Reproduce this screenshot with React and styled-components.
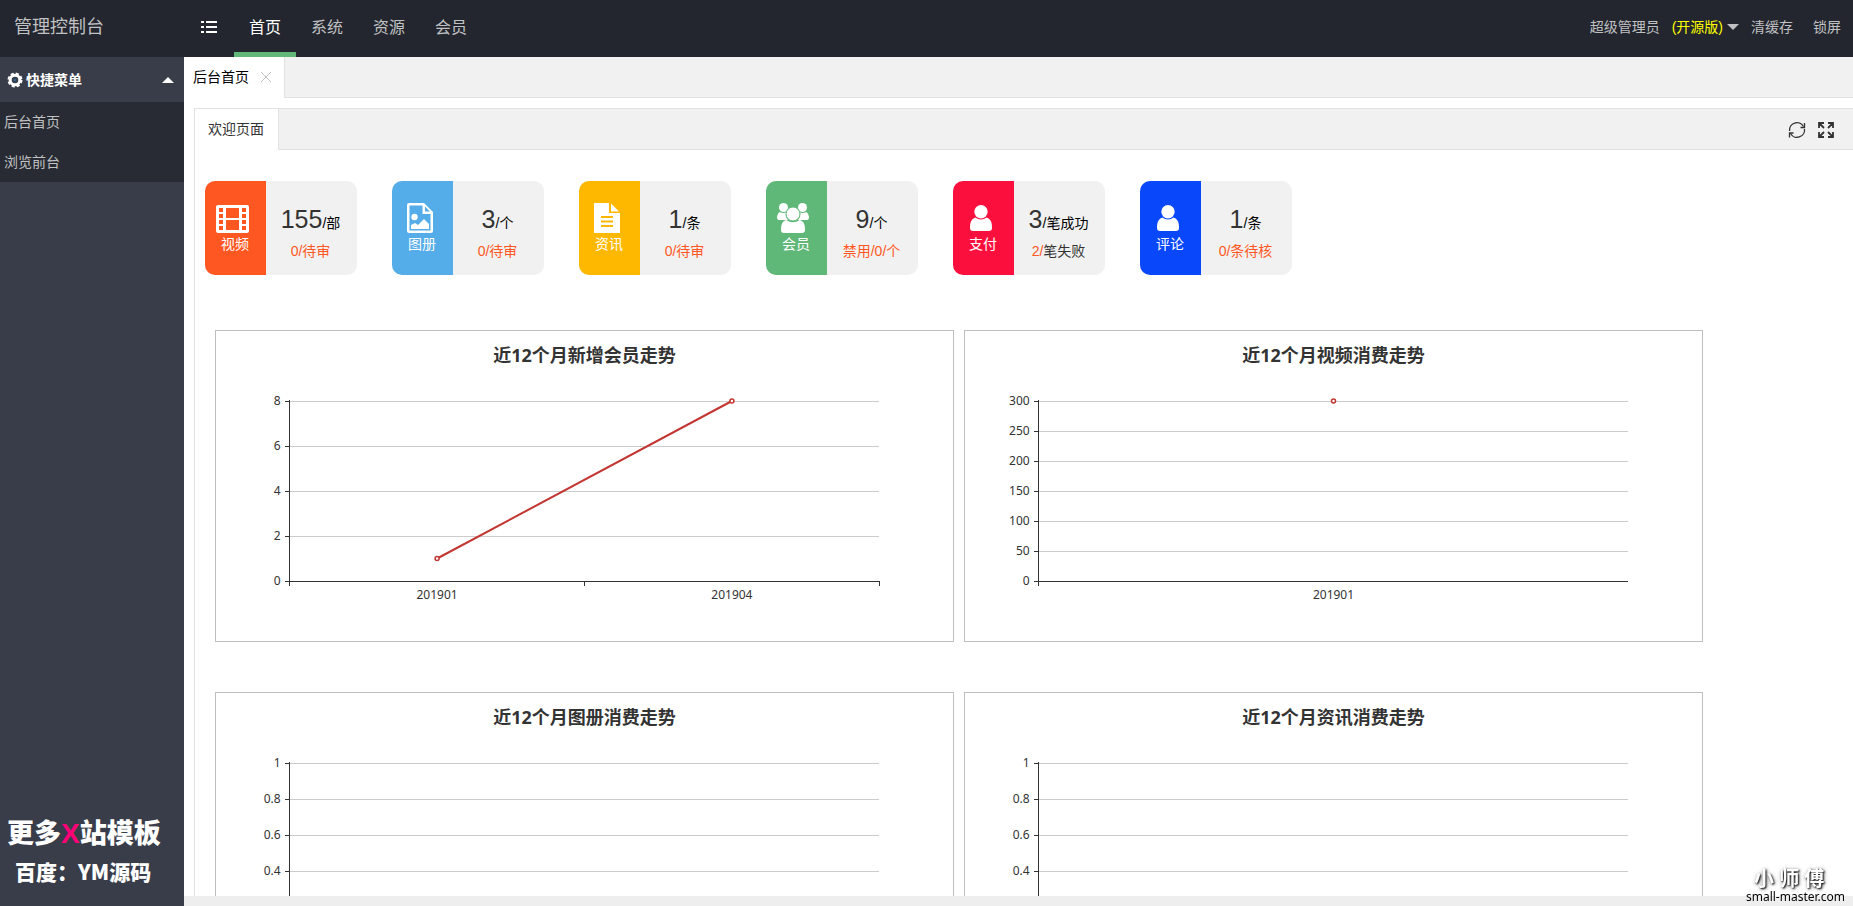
import React from "react";
import styled, { createGlobalStyle } from "styled-components";

const stats = [
  { name: "视频", icon: "film", color: "#ff5722", value: "155", unit: "/部", sub: "0/待审" },
  { name: "图册", icon: "image", color: "#54ade8", value: "3", unit: "/个", sub: "0/待审" },
  { name: "资讯", icon: "doc", color: "#ffb800", value: "1", unit: "/条", sub: "0/待审" },
  { name: "会员", icon: "group", color: "#5fb878", value: "9", unit: "/个", sub: "禁用/0/个" },
  { name: "支付", icon: "user", color: "#fb0f3c", value: "3", unit: "/笔成功", sub: "2/", subRest: "笔失败" },
  { name: "评论", icon: "user", color: "#0848fa", value: "1", unit: "/条", sub: "0/条待核" },
];

const charts = [
  { title: "近12个月新增会员走势", max: 8, ticks: [0, 2, 4, 6, 8], labels: ["201901", "201904"], data: [1, 8] },
  { title: "近12个月视频消费走势", max: 300, ticks: [0, 50, 100, 150, 200, 250, 300], labels: ["201901"], data: [300] },
  { title: "近12个月图册消费走势", max: 1, ticks: [0, 0.2, 0.4, 0.6, 0.8, 1], labels: [], data: [] },
  { title: "近12个月资讯消费走势", max: 1, ticks: [0, 0.2, 0.4, 0.6, 0.8, 1], labels: [], data: [] },
];

const StatIcon = ({ name }) => {
  if (name === "film") {
    return (
      <svg width="36" height="32" viewBox="0 0 36 32" fill="#fff">
        <path
          fillRule="evenodd"
          d="M3 3h29a2 2 0 0 1 2 2v24a2 2 0 0 1-2 2H3a2 2 0 0 1-2-2V5a2 2 0 0 1 2-2z
          M4 6v4h4V6z M4 12v4h4v-4z M4 18v4h4v-4z M4 24v4h4v-4z
          M27 6v4h4V6z M27 12v4h4v-4z M27 18v4h4v-4z M27 24v4h4v-4z
          M11 6v10h13V6z M11 18v10h13V18z"
        />
      </svg>
    );
  }
  if (name === "image") {
    return (
      <svg width="36" height="32" viewBox="0 0 36 32" fill="#fff">
        <path
          fillRule="evenodd"
          d="M7 1h15l9 9v19a2 2 0 0 1-2 2H7a2 2 0 0 1-2-2V3a2 2 0 0 1 2-2z
          M7.5 3.5v25h21V12h-8V3.5z M23 4.5V9.5h5z"
        />
        <circle cx="12.5" cy="15" r="3.2" />
        <path d="M9 27v-4l4-2 3 2 6-6 5 5v5z" />
      </svg>
    );
  }
  if (name === "doc") {
    return (
      <svg width="36" height="32" viewBox="0 0 36 32" fill="#fff">
        <path fillRule="evenodd" d="M5 1h15v10h11v20H5z M12 14v2h12v-2z M12 18.5v2h12v-2z M12 23v2h12v-2z" />
        <path d="M22 1.5v8h8z" />
      </svg>
    );
  }
  if (name === "group") {
    return (
      <svg width="36" height="32" viewBox="0 0 36 32" fill="#fff">
        <circle cx="7.5" cy="5.5" r="4.5" />
        <circle cx="26.5" cy="5.5" r="4.5" />
        <path d="M3.5 10q4 2 7.5 0c-2 3-1 6 1 8H3q-2 0-2-3 0-3 2.5-5z M30.5 10q-4 2-7.5 0c2 3 1 6-1 8h9q2 0 2-3 0-3-2.5-5z" />
        <circle cx="17" cy="12" r="7" stroke="#5fb878" />
        <path d="M10.5 18c4 3 9 3 13 0 5 1 5.5 6 5.5 10q0 3-3 3H8q-3 0-3-3c0-4 0.5-9 5.5-10z" />
      </svg>
    );
  }
  return (
    <svg width="36" height="32" viewBox="0 0 36 32" fill="#fff">
      <circle cx="18" cy="9.7" r="6.7" />
      <path d="M12.5 15.5c3 2.5 8 2.5 11 0 5 2 5.5 6 5.5 10.5q0 3-3 3H10q-3 0-3-3c0-4.5 0.5-8.5 5.5-10.5z" />
    </svg>
  );
};

const Chart = ({ title, max, ticks, labels, data }) => {
  const top = 70;
  const bottom = 250;
  const step = labels.length ? 80 / labels.length : 80;
  const x = (i) => `${10 + step * (i + 0.5)}%`;
  const y = (v) => bottom - (v / max) * (bottom - top);
  return (
    <ChartBox>
      <h3>{title}</h3>
      <svg width="100%" height="310" role="img" aria-label={title}>
        {ticks.map((t) => (
          <g key={t} shapeRendering="crispEdges">
            {t > 0 && <line x1="10%" x2="90%" y1={y(t)} y2={y(t)} stroke="#ccc" />}
            <svg x="10%" y={y(t)} overflow="visible">
              <line x1="-5" x2="0" y1="0" y2="0" stroke="#333" />
              <text x="-9" y="4" textAnchor="end">
                {t}
              </text>
            </svg>
          </g>
        ))}
        <g stroke="#333" shapeRendering="crispEdges">
          <line x1="10%" x2="10%" y1={top - 1} y2={bottom + 5} />
          <line x1="10%" x2="90%" y1={bottom} y2={bottom} />
          {labels.length > 1 &&
            labels.map((l, i) => (
              <line
                key={l}
                x1={`${10 + step * (i + 1)}%`}
                x2={`${10 + step * (i + 1)}%`}
                y1={bottom}
                y2={bottom + 5}
              />
            ))}
        </g>
        {labels.map((l, i) => (
          <text key={l} x={x(i)} y={bottom + 18} textAnchor="middle">
            {l}
          </text>
        ))}
        {data.slice(1).map((v, i) => (
          <line key={i} x1={x(i)} y1={y(data[i])} x2={x(i + 1)} y2={y(v)} stroke="#c23531" strokeWidth="2" />
        ))}
        {data.map((v, i) => (
          <circle key={i} cx={x(i)} cy={y(v)} r="2" fill="#fff" stroke="#c23531" strokeWidth="1.5" />
        ))}
      </svg>
    </ChartBox>
  );
};

const App = () => {
  return (
    <>
      <GlobalStyle />
      <Page>
        <Header>
          <Logo>管理控制台</Logo>
          <MenuToggle type="button" aria-label="菜单">
            <svg width="16" height="14" viewBox="0 0 16 14" fill="#fff">
              <path d="M0 1h3v2H0z M5 1h11v2H5z M0 6h3v2H0z M5 6h11v2H5z M0 11h3v2H0z M5 11h11v2H5z" />
            </svg>
          </MenuToggle>
          <Nav>
            <NavLink href="#" $active>
              首页
            </NavLink>
            <NavLink href="#">系统</NavLink>
            <NavLink href="#">资源</NavLink>
            <NavLink href="#">会员</NavLink>
          </Nav>
          <UserNav>
            <UserLink href="#">
              超级管理员 <Edition>(开源版)</Edition>
              <Caret />
            </UserLink>
            <UserLink href="#">清缓存</UserLink>
            <UserLink href="#">锁屏</UserLink>
          </UserNav>
        </Header>
        <Body>
          <Sidebar>
            <SideTitle type="button">
              <svg width="16" height="16" viewBox="0 0 16 16" fill="none" stroke="#fff">
                <circle cx="8" cy="8" r="4.8" strokeWidth="3" />
                <circle cx="8" cy="8" r="6.5" strokeWidth="2" strokeDasharray="3.1 2" />
                <circle cx="8" cy="8" r="1" stroke="#1e9fff" strokeWidth="1" opacity="0.4" />
              </svg>
              <span>快捷菜单</span>
              <Caret $up />
            </SideTitle>
            <SideMenu>
              <a href="#">后台首页</a>
              <a href="#">浏览前台</a>
            </SideMenu>
            <Promo>
              <PromoTitle>
                更多<em>X</em>站模板
              </PromoTitle>
              <PromoText>百度：YM源码</PromoText>
            </Promo>
          </Sidebar>
          <Main>
            <TabBar>
              <PageTab>
                后台首页
                <button type="button" aria-label="关闭">
                  <svg width="10" height="10" viewBox="0 0 10 10" stroke="#c2c2c2">
                    <path d="M0 0l10 10M10 0L0 10" />
                  </svg>
                </button>
              </PageTab>
            </TabBar>
            <Panel>
              <PanelHead>
                <PanelTab>欢迎页面</PanelTab>
                <Tools>
                  <button type="button" aria-label="刷新">
                    <svg width="18" height="18" viewBox="0 0 18 18" fill="none" stroke="#333" strokeWidth="1.3">
                      <path d="M1.5 10A7.5 7.5 0 0 1 15.5 5.5M16.5 8A7.5 7.5 0 0 1 2.5 12.5" />
                      <path d="M16.5 2v4.5h-4M1.5 16.5V12h4" />
                    </svg>
                  </button>
                  <button type="button" aria-label="全屏">
                    <svg width="18" height="18" viewBox="0 0 18 18" fill="none" stroke="#333" strokeWidth="1.8">
                      <path d="M2 7V2h5M2 2l5 5M11 2h5v5M16 2l-5 5M2 11v5h5M2 16l5-5M16 11v5h-5M16 16l-5-5" />
                    </svg>
                  </button>
                </Tools>
              </PanelHead>
              <Stats>
                {stats.map((s) => (
                  <Stat key={s.name}>
                    <StatSide $color={s.color}>
                      <StatIcon name={s.icon} />
                      <span>{s.name}</span>
                    </StatSide>
                    <StatInfo>
                      <StatValue>
                        <b>{s.value}</b>
                        {s.unit}
                      </StatValue>
                      <StatSub>
                        {s.sub}
                        {s.subRest && <span>{s.subRest}</span>}
                      </StatSub>
                    </StatInfo>
                  </Stat>
                ))}
              </Stats>
              <Charts>
                {charts.map((c) => (
                  <Chart key={c.title} {...c} />
                ))}
              </Charts>
            </Panel>
            <Footer />
          </Main>
        </Body>
        <Watermark>
          <strong>小 师 傅</strong>
          <span>small-master.com</span>
        </Watermark>
      </Page>
    </>
  );
};

const GlobalStyle = createGlobalStyle`
  * {
    box-sizing: border-box;
  }
  body {
    margin: 0;
    font: 14px/24px "Liberation Sans", "Noto Sans CJK SC", sans-serif;
    color: #333;
    background: #fff;
  }
  a {
    color: inherit;
    text-decoration: none;
  }
  button {
    font: inherit;
    color: inherit;
    background: none;
    border: none;
    padding: 0;
    cursor: pointer;
  }
  svg {
    display: block;
    flex-shrink: 0;
  }
`;

const Page = styled.div`
  display: flex;
  flex-direction: column;
  height: 100vh;
  overflow: hidden;
`;

const Header = styled.header`
  display: flex;
  height: 57px;
  flex-shrink: 0;
  background: #23262e;
  color: #c0c1c3;
`;

const Logo = styled.div`
  width: 184px;
  padding-left: 14px;
  font-size: 18px;
  line-height: 54px;
`;

const MenuToggle = styled.button`
  width: 50px;
  padding: 0 17px;
  height: 54px;
`;

const Nav = styled.nav`
  display: flex;
`;

const NavLink = styled.a`
  padding: 0 15px;
  font-size: 16px;
  line-height: 56px;
  color: ${({ $active }) => ($active ? "#fff" : "inherit")};
  box-shadow: ${({ $active }) => ($active ? "inset 0 -5px #5fb878" : "none")};
`;

const UserNav = styled.div`
  display: flex;
  gap: 20px;
  margin-left: auto;
  padding-right: 12px;
  line-height: 54px;
`;

const UserLink = styled.a`
  display: flex;
  align-items: center;
  height: 54px;
  &:first-child {
    margin-right: -8px;
  }
`;

const Edition = styled.span`
  margin: 0 4px 0 12px;
  color: #ff0;
`;

const Caret = styled.i`
  border: 6px solid transparent;
  border-top-color: ${({ $up }) => ($up ? "transparent" : "#c0c1c3")};
  border-bottom-color: ${({ $up }) => ($up ? "#fff" : "transparent")};
  margin-top: ${({ $up }) => ($up ? "-6px" : "6px")};
`;

const Body = styled.div`
  display: flex;
  flex: 1;
  min-height: 0;
`;

const Sidebar = styled.aside`
  display: flex;
  flex-direction: column;
  width: 184px;
  flex-shrink: 0;
  background: #393d49;
  color: #fff;
`;

const SideTitle = styled.button`
  display: flex;
  align-items: center;
  height: 45px;
  padding: 0 10px 0 7px;
  font-weight: bold;
  span {
    flex: 1;
    margin-left: 3px;
    text-align: left;
  }
`;

const SideMenu = styled.nav`
  background: #282b33;
  color: #c0c1c3;
  a {
    display: block;
    padding-left: 4px;
    line-height: 40px;
  }
`;

const Promo = styled.div`
  margin-top: auto;
  padding: 0 0 16px 7px;
  font-family: "Noto Sans CJK SC", sans-serif;
  font-weight: 900;
  white-space: nowrap;
`;

const PromoTitle = styled.div`
  font-size: 27px;
  line-height: 40px;
  em {
    font-family: "Liberation Sans", sans-serif;
    font-size: 28px;
    line-height: 1;
    font-style: normal;
    font-weight: bold;
    color: #ff0078;
  }
`;

const PromoText = styled.div`
  padding-left: 8px;
  font-size: 21px;
  line-height: 38px;
`;

const Main = styled.main`
  display: flex;
  flex-direction: column;
  flex: 1;
  min-width: 0;
`;

const TabBar = styled.div`
  display: flex;
  height: 41px;
  flex-shrink: 0;
  background: #f1f1f1;
  box-shadow: inset 0 -1px #e2e2e2;
`;

const PageTab = styled.div`
  display: flex;
  align-items: center;
  gap: 12px;
  padding: 0 13px 2px 9px;
  background: #fff;
  border-right: 1px solid #e2e2e2;
  color: #000;
`;

const Panel = styled.section`
  flex: 1;
  min-height: 0;
  margin: 10px 0 0 10px;
  overflow: hidden;
  border: 1px solid #e2e2e2;
  border-width: 1px 0 0 1px;
`;

const PanelHead = styled.div`
  display: flex;
  justify-content: space-between;
  height: 41px;
  background: #f1f1f1;
  box-shadow: inset 0 -1px #e2e2e2;
`;

const PanelTab = styled.div`
  padding: 0 14px 0 13px;
  line-height: 40px;
  background: #fff;
  border-right: 1px solid #e2e2e2;
`;

const Tools = styled.div`
  display: flex;
  align-items: center;
  gap: 11px;
  padding-right: 18px;
`;

const Stats = styled.div`
  display: flex;
  flex-wrap: wrap;
  gap: 35px;
  padding: 31px 10px 55px;
`;

const Stat = styled.div`
  display: flex;
  width: 152px;
  height: 94px;
  overflow: hidden;
  border-radius: 10px;
  background: #f1f1f1;
`;

const StatSide = styled.div`
  width: 61px;
  padding: 21px 0 0 10px;
  background: ${({ $color }) => $color};
  color: #fff;
  span {
    display: block;
    padding-left: 6px;
    line-height: 20px;
  }
`;

const StatInfo = styled.div`
  flex: 1;
  padding: 21px 2px 0 0;
  text-align: center;
  white-space: nowrap;
`;

const StatValue = styled.div`
  font-size: 14px;
  line-height: 34px;
  color: #000;
  b {
    font-size: 25px;
    font-weight: normal;
    color: #333;
  }
`;

const StatSub = styled.div`
  line-height: 22px;
  color: #ff5722;
  span {
    color: #333;
  }
`;

const Charts = styled.div`
  display: grid;
  grid-template-columns: 1fr 1fr;
  gap: 50px 10px;
  padding: 0 150px 0 20px;
`;

const ChartBox = styled.div`
  height: 312px;
  border: 1px solid #bfbfbf;
  h3 {
    height: 0;
    margin: 0;
    font: bold 18px/48px "Open Sans", "Noto Sans CJK SC", sans-serif;
    text-align: center;
  }
  text {
    font: 12px "Noto Sans", sans-serif;
    fill: #333;
  }
`;

const Footer = styled.footer`
  height: 10px;
  flex-shrink: 0;
  background: #eee;
`;

const Watermark = styled.div`
  position: fixed;
  right: 8px;
  bottom: 0;
  display: flex;
  flex-direction: column;
  padding-bottom: 1px;
  font: 12px/16px "Noto Sans", "Noto Sans CJK SC", sans-serif;
  color: #000;
  strong {
    padding-left: 8px;
    font-size: 20px;
    line-height: 20px;
    color: #fff;
    text-shadow: 1px 1px 2px #000, 1px 1px 4px #888;
  }
`;

export default App;
